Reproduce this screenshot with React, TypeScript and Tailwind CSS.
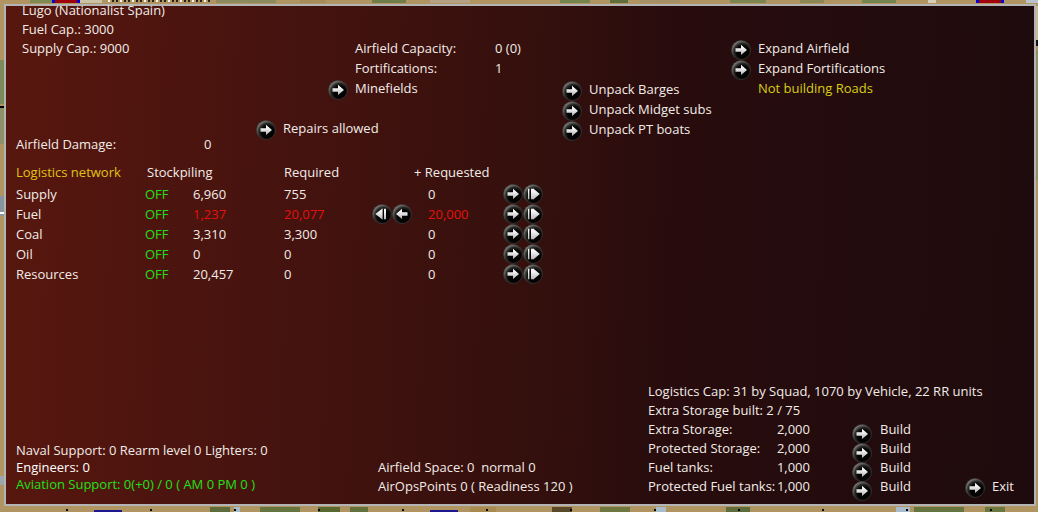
import type { ReactNode } from "react";

type OrbShape = "right" | "left" | "first" | "last";

interface LogisticsRow {
  name: string;
  stock: string;
  required: string;
  requested: string;
  short?: boolean;
}

const LOGISTICS: LogisticsRow[] = [
  { name: "Supply", stock: "6,960", required: "755", requested: "0" },
  { name: "Fuel", stock: "1,237", required: "20,077", requested: "20,000", short: true },
  { name: "Coal", stock: "3,310", required: "3,300", requested: "0" },
  { name: "Oil", stock: "0", required: "0", requested: "0" },
  { name: "Resources", stock: "20,457", required: "0", requested: "0" },
];

const STORAGE = [
  { label: "Extra Storage:", value: "2,000" },
  { label: "Protected Storage:", value: "2,000" },
  { label: "Fuel tanks:", value: "1,000" },
  { label: "Protected Fuel tanks:", value: "1,000" },
];

const SHAPES: Record<OrbShape, string> = {
  right: "M4.5 8.2H10V4.8L16 10L10 15V11.8H4.5Z",
  left: "M15.5 8.2H10V4.8L4 10L10 15V11.8H15.5Z",
  first: "M3.4 10L10.6 4.2V15.8ZM12 4.8H14V15.2H12Z",
  last: "M5 4.8H6.4V15.2H5ZM8 4.8H10V15.2H8ZM10 4.2L16.8 10L10 15.8Z",
};

// [x, width, colour] runs of terrain along the top and bottom edges
const TERRAIN_TOP: [number, number, string][] = [
  [30, 22, "#7d8a52"], [52, 28, "#0000d8"], [55, 22, "#a00008"], [80, 22, "#c9c2a6"],
  [216, 60, "#8c8a5c"], [300, 26, "#a58c58"], [372, 34, "#6f7d48"], [430, 40, "#b5a184"],
  [560, 30, "#71854c"], [610, 18, "#5f6f3c"], [640, 40, "#a89066"], [730, 36, "#7b8650"],
  [800, 24, "#8b8855"], [862, 34, "#73864f"], [928, 8, "#d6cdbb"], [976, 28, "#0000d8"],
  [979, 22, "#a00008"], [1026, 12, "#b9c3cc"],
];

const TERRAIN_BOTTOM: [number, number, string][] = [
  [94, 28, "#1c1690"], [210, 20, "#5d6c3a"], [234, 6, "#a9bccb"], [260, 40, "#66743f"],
  [318, 22, "#59682f"], [350, 18, "#64703c"], [430, 28, "#1c1690"], [470, 26, "#a98a4f"],
  [552, 20, "#5a4a2a"], [600, 30, "#6f7741"], [656, 10, "#a9bccb"], [726, 24, "#5d6c3a"],
  [896, 14, "#a9bccb"], [914, 50, "#66743f"], [985, 20, "#6b773f"],
];

function Terrain() {
  return (
    <svg
      aria-hidden="true"
      className="absolute inset-0 h-full w-full"
      viewBox="0 0 1038 512"
      preserveAspectRatio="none"
    >
      <rect width="1038" height="512" fill="#b09562" />
      {TERRAIN_TOP.map(([x, w, fill]) => (
        <rect key={x} x={x} y="0" width={w} height="3" fill={fill} />
      ))}
      {Array.from({ length: 26 }, (_, i) => (
        <rect key={i} x={108 + i * 4} y="0" width="2" height="2" fill={i % 3 ? "#25231c" : "#f4f2ea"} />
      ))}
      {TERRAIN_BOTTOM.map(([x, w, fill]) => (
        <rect key={x} x={x} y={fill === "#1c1690" ? 510 : 507} width={w} height="5" fill={fill} />
      ))}
      {Array.from({ length: 12 }, (_, i) => (
        <rect key={i} x={66 + i * 84} y="509" width="2" height="2" fill="#050505" />
      ))}
      {/* side edges */}
      <rect x="0" y="60" width="4" height="44" fill="#7c8a58" />
      <rect x="0" y="106" width="4" height="2" fill="#000000" />
      <rect x="0" y="108" width="4" height="36" fill="#8f9068" />
      <rect x="0" y="196" width="4" height="20" fill="#8794a0" />
      <rect x="0" y="212" width="4" height="2" fill="#ffffff" />
      <rect x="0" y="476" width="4" height="9" fill="#9aa6ab" />
      <rect x="1036" y="6" width="2" height="34" fill="#c9bb9a" />
      <rect x="1036" y="40" width="2" height="6" fill="#111111" />
      <rect x="1036" y="50" width="2" height="130" fill="#8f9165" />
    </svg>
  );
}

function Orb({ shape = "right" }: { shape?: OrbShape }) {
  return (
    <svg aria-hidden="true" className="size-5 shrink-0" viewBox="0 0 20 20">
      <defs>
        <radialGradient id="orb" cx="0.6" cy="0.62" r="0.66">
          <stop offset="0.5" stopColor="#030303" />
          <stop offset="0.72" stopColor="#2a2a28" />
          <stop offset="1" stopColor="#9a9a96" />
        </radialGradient>
        <linearGradient id="arrow" x1="0" y1="0" x2="0" y2="1">
          <stop offset="0.3" stopColor="#f4f4f4" />
          <stop offset="1" stopColor="#b4b4b4" />
        </linearGradient>
      </defs>
      <circle cx="10" cy="10" r="9.5" fill="url(#orb)" stroke="#3a3634" strokeWidth="0.8" />
      <path d={SHAPES[shape]} fill="url(#arrow)" />
    </svg>
  );
}

function OrbButton({ children }: { children: ReactNode }) {
  return (
    <button type="button" className="flex h-5 items-center gap-[7px] text-left whitespace-nowrap">
      <span className="pt-1">
        <Orb />
      </span>
      {children}
    </button>
  );
}

function IconButton({ shape, label }: { shape: OrbShape; label: string }) {
  return (
    <button type="button" aria-label={label} className="block">
      <Orb shape={shape} />
    </button>
  );
}

function BaseOverview() {
  return (
    <section className="grid h-[156px] grid-cols-[250px_306px_169px_1fr]">
      <div className="-mt-[5px] flex flex-col justify-between pb-2">
        <div className="pl-4 leading-[19px]">
          <h1>Lugo (Nationalist Spain)</h1>
          <p>Fuel Cap.: 3000</p>
          <p>Supply Cap.: 9000</p>
        </div>
        <p className="flex pl-2.5 leading-5">
          <span className="w-[188px]">Airfield Damage:</span>
          <span>0</span>
        </p>
      </div>

      <div className="pt-8 leading-5">
        <dl className="grid grid-cols-[140px_1fr] pl-[99px]">
          <dt>Airfield Capacity:</dt>
          <dd>0 (0)</dd>
          <dt>Fortifications:</dt>
          <dd>1</dd>
        </dl>
        <div className="pl-[72px]">
          <OrbButton>Minefields</OrbButton>
        </div>
        <div className="pt-5">
          <OrbButton>Repairs allowed</OrbButton>
        </div>
      </div>

      <div className="pt-[73px] leading-5">
        <OrbButton>Unpack Barges</OrbButton>
        <OrbButton>Unpack Midget subs</OrbButton>
        <OrbButton>Unpack PT boats</OrbButton>
      </div>

      <div className="pt-8 leading-5">
        <OrbButton>Expand Airfield</OrbButton>
        <OrbButton>Expand Fortifications</OrbButton>
        <p className="pl-[27px] text-[#d6cf14]">Not building Roads</p>
      </div>
    </section>
  );
}

function LogisticsTable() {
  return (
    <table className="ml-2.5 w-[530px] table-fixed text-left leading-5">
      <colgroup>
        <col className="w-[129px]" />
        <col className="w-12" />
        <col className="w-[91px]" />
        <col className="w-[88px]" />
        <col className="w-14" />
        <col className="w-[75px]" />
        <col />
      </colgroup>
      <thead>
        <tr className="h-[22px] align-top">
          <th className="font-normal text-[#e0c414]">Logistics network</th>
          <th colSpan={2} className="pl-0.5 font-normal">Stockpiling</th>
          <th className="font-normal">Required</th>
          <th colSpan={2} className="pl-[42px] font-normal">+ Requested</th>
          <td />
        </tr>
      </thead>
      <tbody>
        {LOGISTICS.map((row) => {
          const tone = row.short ? "text-[#e8100c]" : "";
          return (
            <tr key={row.name} className="h-5">
              <th className="font-normal">{row.name}</th>
              <td>
                <button type="button" className="block text-[#1fe01a]">OFF</button>
              </td>
              <td className={tone}>{row.stock}</td>
              <td className={tone}>{row.required}</td>
              <td>
                {row.short && (
                  <div className="flex">
                    <IconButton shape="first" label={`Clear ${row.name} request`} />
                    <IconButton shape="left" label={`Request less ${row.name}`} />
                  </div>
                )}
              </td>
              <td className={tone}>{row.requested}</td>
              <td>
                <div className="flex">
                  <IconButton shape="right" label={`Request more ${row.name}`} />
                  <IconButton shape="last" label={`Request maximum ${row.name}`} />
                </div>
              </td>
            </tr>
          );
        })}
      </tbody>
    </table>
  );
}

function BaseFooter() {
  return (
    <footer className="mt-auto grid grid-cols-[372px_270px_1fr] items-end pb-2">
      <div className="pb-[3px] pl-2.5 leading-[17px]">
        <p>Naval Support: 0 Rearm level 0 Lighters: 0</p>
        <p className="font-medium text-white">Engineers: 0</p>
        <p className="text-[#1fe01a]">Aviation Support: 0(+0) / 0 ( AM 0 PM 0 )</p>
      </div>

      <div className="leading-[19px]">
        <p>Airfield Space: 0&nbsp; normal 0</p>
        <p>AirOpsPoints 0 ( Readiness 120 )</p>
      </div>

      <div className="flex items-end justify-between pr-5 leading-[19px]">
        <div>
          <p className="-mr-12 whitespace-nowrap">
            Logistics Cap: 31 by Squad, 1070 by Vehicle, 22 RR units
          </p>
          <p>Extra Storage built: 2 / 75</p>
          <table className="w-[270px] table-fixed text-left">
            <colgroup>
              <col className="w-[128px]" />
              <col className="w-[34px]" />
              <col />
            </colgroup>
            <tbody>
              {STORAGE.map((item) => (
                <tr key={item.label} className="h-[19px]">
                  <th className="font-normal whitespace-nowrap">{item.label}</th>
                  <td className="text-right">{item.value}</td>
                  <td className="pl-[42px]">
                    <button type="button" className="flex h-[19px] items-center gap-2">
                      <span className="pt-2">
                        <Orb />
                      </span>
                      Build
                    </button>
                  </td>
                </tr>
              ))}
            </tbody>
          </table>
        </div>
        <OrbButton>Exit</OrbButton>
      </div>
    </footer>
  );
}

export default function App() {
  return (
    <div className="relative flex min-h-screen p-1 pr-0.5 pb-1.5 font-['Open_Sans',sans-serif] text-[13px] text-[#f2ece8]">
      <Terrain />
      <main className="relative flex flex-1 flex-col border-2 border-[#b4b4b4] bg-[linear-gradient(92deg,#57170e_0%,#47130f_25%,#35100d_50%,#280c0d_65%,#1e0b0d_100%)]">
        <BaseOverview />
        <LogisticsTable />
        <BaseFooter />
      </main>
    </div>
  );
}
